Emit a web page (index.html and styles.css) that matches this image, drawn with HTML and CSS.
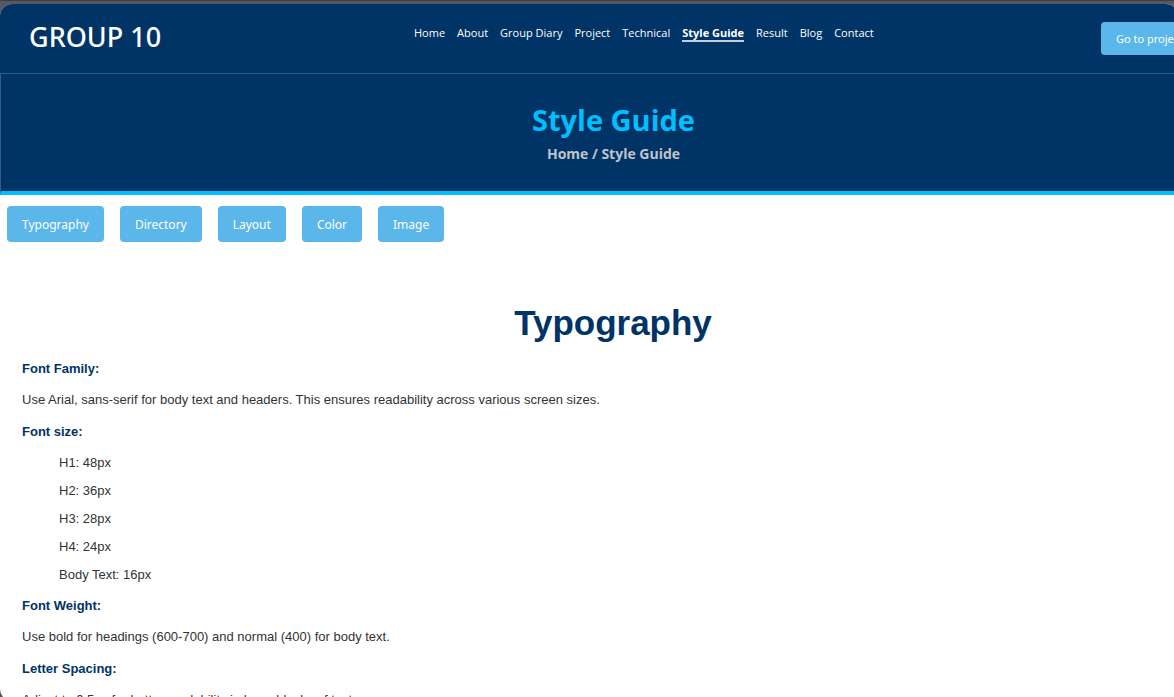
FILE: index.html
```html
<!DOCTYPE html>
<html lang="en">
<head>
<meta charset="utf-8">
<title>Style Guide - Group 10</title>
<link rel="stylesheet" href="styles.css">
</head>
<body>
<div class="frame">
<div class="page">
  <header class="header">
    <a class="brand" href="#home">GROUP 10</a>
    <nav class="nav">
      <a href="#home">Home</a>
      <a href="#about">About</a>
      <a href="#diary">Group Diary</a>
      <a href="#project">Project</a>
      <a href="#technical">Technical</a>
      <a class="active" href="#guide">Style Guide</a>
      <a href="#result">Result</a>
      <a href="#blog">Blog</a>
      <a href="#contact">Contact</a>
    </nav>
    <button class="button header-button" type="button">Go to project</button>
  </header>
  <section class="banner">
    <h1>Style Guide</h1>
    <p>Home / Style Guide</p>
  </section>
  <div class="tabs">
    <button class="button" type="button">Typography</button>
    <button class="button" type="button">Directory</button>
    <button class="button" type="button">Layout</button>
    <button class="button" type="button">Color</button>
    <button class="button" type="button">Image</button>
  </div>
  <main class="content">
    <h2>Typography</h2>
    <h3>Font Family:</h3>
    <p>Use Arial, sans-serif for body text and headers. This ensures readability across various screen sizes.</p>
    <h3>Font size:</h3>
    <ul>
      <li>H1: 48px</li>
      <li>H2: 36px</li>
      <li>H3: 28px</li>
      <li>H4: 24px</li>
      <li>Body Text: 16px</li>
    </ul>
    <h3>Font Weight:</h3>
    <p>Use bold for headings (600-700) and normal (400) for body text.</p>
    <h3>Letter Spacing:</h3>
    <p>Adjust to 0.5px for better readability in large blocks of text.</p>
  </main>
</div>
</div>
</body>
</html>
```

FILE: styles.css
```css
* { box-sizing: border-box; }
html, body { height: 100%; }
body {
  margin: 0;
  padding-top: 3px;
  border-top: 1px solid #33414e;
  background: #58595e;
  overflow: hidden;
  font-family: "Liberation Sans", Arial, sans-serif;
}
.frame {
  width: calc(100% + 4px);
  height: 100vh;
  border-radius: 12px;
  background: #fff;
  overflow: hidden;
}
.page { width: calc(100% + 48px); }
.header {
  display: grid;
  grid-template-columns: 414px 1fr 125px;
  align-items: start;
  height: 69px;
  background: #003366;
  font-family: "Open Sans", "Noto Sans", sans-serif;
}
.brand {
  padding: 13px 0 0 29px;
  font-family: "Noto Sans", "Open Sans", sans-serif;
  font-size: 27px;
  line-height: 40px;
  font-weight: 500;
  color: #fff;
  text-decoration: none;
}
.nav {
  display: flex;
  gap: 12px;
  padding-top: 22px;
}
.nav a {
  color: #fff;
  font-size: 11px;
  line-height: 14px;
  text-decoration: none;
  white-space: nowrap;
}
.nav .active {
  font-weight: 700;
  border-bottom: 2px solid #c5ced8;
}
.button {
  padding: 0 15px;
  height: 36px;
  border: 0;
  border-radius: 4px;
  background: #5bb6ea;
  color: #fff;
  font-family: "Noto Sans", "Open Sans", sans-serif;
  font-size: 12px;
  white-space: nowrap;
}
.header-button {
  justify-self: start;
  margin-top: 18px;
  height: 33px;
  font-size: 11px;
}
.banner {
  padding: 26px 0;
  height: 122px;
  border-top: 1px solid #335c85;
  border-left: 1px solid #335c85;
  border-bottom: 4px solid #00bfff;
  background: #003366;
  font-family: "Open Sans", "Noto Sans", sans-serif;
  text-align: center;
}
.banner h1 {
  margin: 0;
  color: #00bfff;
  font-size: 29px;
  line-height: 40px;
}
.banner p {
  margin: 5px 0 0;
  color: #c0c4ca;
  font-size: 14px;
  line-height: 18px;
  font-weight: 700;
}
.tabs {
  display: flex;
  gap: 16px;
  padding: 11px 7px 31px;
}
.content {
  padding: 29px 22px;
  border-top: 1px solid #fbfbfb;
  border-radius: 8px;
  color: #333;
  font-size: 13px;
  line-height: 20px;
}
.content h2 {
  margin: 0 0 16px;
  color: #003366;
  font-size: 35px;
  line-height: 40px;
  text-align: center;
}
.content h3 {
  margin: 0;
  color: #003366;
  font-size: 13px;
  line-height: 20px;
}
.content p { margin: 11px 0 12px; }
.content ul {
  margin: 7px 0;
  padding: 0 0 0 37px;
  list-style: none;
}
.content li { line-height: 28px; }
```
